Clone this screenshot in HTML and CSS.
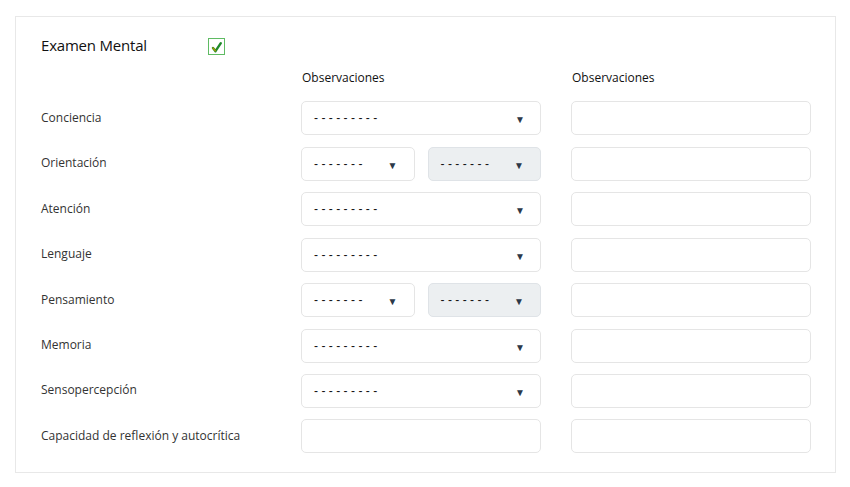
FILE: index.html
```html
<!DOCTYPE html>
<html lang="es">
<head>
<meta charset="utf-8">
<link rel="stylesheet" href="styles.css">
</head>
<body>
<div class="card">
  <div class="title-row">
    <h2 class="title">Examen Mental</h2>
    <span class="check">
      <svg width="17" height="17" viewBox="0 0 17 17"><rect x="0.5" y="0.5" width="16" height="16" fill="#fff" stroke="#5fbb63"/><path d="M5 10 L7.5 13.2 L12.8 5.2" fill="none" stroke="#1f8a2a" stroke-width="2.4" stroke-linecap="round" stroke-linejoin="round"/><path d="M5 10 L7.3 12.8" fill="none" stroke="#a89a00" stroke-width="1.4" stroke-linecap="round"/></svg>
    </span>
  </div>
  <div class="grid">
    <div class="head"></div>
    <div class="head">Observaciones</div>
    <div class="head">Observaciones</div>

    <div class="label">Conciencia</div>
    <div class="select"><span class="dash">---------</span><span class="arrow">▼</span></div>
    <div class="input"></div>

    <div class="label">Orientación</div>
    <div class="split">
      <div class="select"><span class="dash">-------</span><span class="arrow">▼</span></div>
      <div class="select disabled"><span class="dash">-------</span><span class="arrow">▼</span></div>
    </div>
    <div class="input"></div>

    <div class="label">Atención</div>
    <div class="select"><span class="dash">---------</span><span class="arrow">▼</span></div>
    <div class="input"></div>

    <div class="label">Lenguaje</div>
    <div class="select"><span class="dash">---------</span><span class="arrow">▼</span></div>
    <div class="input"></div>

    <div class="label">Pensamiento</div>
    <div class="split">
      <div class="select"><span class="dash">-------</span><span class="arrow">▼</span></div>
      <div class="select disabled"><span class="dash">-------</span><span class="arrow">▼</span></div>
    </div>
    <div class="input"></div>

    <div class="label">Memoria</div>
    <div class="select"><span class="dash">---------</span><span class="arrow">▼</span></div>
    <div class="input"></div>

    <div class="label">Sensopercepción</div>
    <div class="select"><span class="dash">---------</span><span class="arrow">▼</span></div>
    <div class="input"></div>

    <div class="label">Capacidad de reflexión y autocrítica</div>
    <div class="input"></div>
    <div class="input"></div>
  </div>
</div>
</body>
</html>
```
FILE: styles.css
```css
* { box-sizing: border-box; }
html, body { margin: 0; padding: 0; background: #fff; }
body {
  font-family: "Open Sans", "Noto Sans", sans-serif;
  color: #222;
  padding: 16px 14px 0 15px;
}
.card {
  border: 1px solid #e8e8e8;
  padding: 14px 24px 19px 25px;
}
.title-row {
  display: flex;
  align-items: center;
  height: 28px;
}
.title {
  margin: 0;
  font-size: 15px;
  font-weight: 400;
  color: #111;
  width: 167px;
  letter-spacing: -0.2px;
}
.check { display: flex; width: 17px; height: 17px; margin-top: 2px; }
.grid {
  display: grid;
  grid-template-columns: 230px 240px 240px;
  column-gap: 30px;
  row-gap: 11.43px;
}
.head {
  font-size: 12px;
  color: #111;
  height: 31px;
  padding-top: 5px;
  display: flex;
  align-items: center;
  padding-left: 1px;
}
.label {
  font-size: 12px;
  color: #333;
  display: flex;
  align-items: center;
  height: 34px;
  padding-bottom: 2px;
}
.select, .input {
  height: 34px;
  border: 1px solid #e5e5e5;
  border-radius: 5px;
  background: #fff;
}
.select {
  display: flex;
  align-items: center;
  justify-content: space-between;
  padding: 0 15px 0 12px;
}
.select.disabled {
  background: #eceff1;
  border-color: #dfe3e7;
}
.dash {
  font-size: 12px;
  letter-spacing: 3.4px;
  color: #111;
  font-family: "Liberation Sans", sans-serif;
}
.arrow {
  font-size: 10px;
  color: #2c3848;
  margin-top: 2px;
}
.split {
  display: grid;
  grid-template-columns: 1fr 1fr;
  column-gap: 13px;
}
.split .select { padding-right: 16px; }
```
